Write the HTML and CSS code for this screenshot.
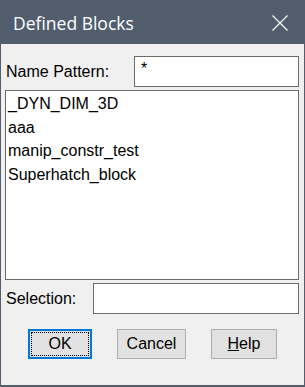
FILE: index.html
```html
<!DOCTYPE html>
<html>
<head>
	<title>Defined Blocks</title>
	<link rel="stylesheet" href="styles.css">
</head>
<body>
	<div class="dialog">
		<div class="titlebar">
			<span class="title">Defined Blocks</span>
			<svg class="close" width="16" height="16" viewBox="0 0 16 16">
				<path d="M0.5 0.5 L15.5 15.5 M15.5 0.5 L0.5 15.5" stroke="#ffffff" stroke-width="1.1" fill="none"/>
			</svg>
		</div>
		<div class="content">
			<div class="field-row pattern-row">
				<label class="label">Name Pattern:</label>
				<div class="textbox pattern-box">*</div>
			</div>
			<div class="block-list">
				<div class="block-item">_DYN_DIM_3D</div>
				<div class="block-item">aaa</div>
				<div class="block-item">manip_constr_test</div>
				<div class="block-item">Superhatch_block</div>
			</div>
			<div class="field-row selection-row">
				<label class="label">Selection:</label>
				<div class="textbox selection-box"></div>
			</div>
			<div class="buttons">
				<button class="btn btn-ok"><span class="focus-ring">OK</span></button>
				<button class="btn btn-cancel">Cancel</button>
				<button class="btn btn-help"><u>H</u>elp</button>
			</div>
		</div>
	</div>
</body>
</html>
```

FILE: styles.css
```css
body{
	margin: 0;
	font-family: 'Liberation Sans', Arial, sans-serif;
	font-size: 16px;
	color: #000000;
	background: #f0f0f0;
}
.dialog{
	width: 305px;
	height: 387px;
	box-sizing: border-box;
	background-color: #f0f0f0;
	border: 1px solid #525e6d;
	border-top: 0;
	border-bottom-width: 2px;
	display: flex;
	flex-direction: column;
}
.titlebar{
	height: 44px;
	background-color: #525e6d;
	color: white;
	display: flex;
	align-items: center;
	justify-content: space-between;
	padding: 0 16px 0 12px;
	flex-shrink: 0;
}
.title{
	font-family: 'Open Sans', 'Noto Sans', sans-serif;
	font-size: 17.5px;
	margin-top: 1px;
}
.close{
	display: block;
	margin-top: 1px;
}
.content{
	padding: 0 5px 0 4px;
	display: flex;
	flex-direction: column;
}
.field-row{
	display: flex;
	align-items: center;
	justify-content: space-between;
}
.pattern-row{
	margin-top: 12px;
}
.label{
	padding-left: 1px;
}
.textbox{
	box-sizing: border-box;
	height: 31px;
	background: white;
	border: 1px solid #6b6b6b;
	padding: 2px 6px;
	line-height: 20px;
}
.pattern-box{
	width: 165px;
}
.selection-box{
	width: 206px;
}
.block-list{
	box-sizing: border-box;
	height: 190px;
	margin-top: 3px;
	background: white;
	border: 1px solid #6b6b6b;
	padding-top: 1px;
}
.block-item{
	height: 23.5px;
	line-height: 23.5px;
	padding-left: 2px;
}
.selection-row{
	margin-top: 3px;
}
.buttons{
	display: flex;
	margin-top: 15px;
	padding-left: 23px;
	gap: 25px;
}
.btn{
	box-sizing: border-box;
	height: 30px;
	font-family: 'Liberation Sans', Arial, sans-serif;
	font-size: 16px;
	color: black;
	background-color: #e1e1e1;
	border: 1px solid #adadad;
	padding: 0;
	margin: 0;
}
.btn-ok{
	width: 64px;
	border: 2px solid #0078d7;
	padding: 1px;
}
.focus-ring{
	display: flex;
	align-items: center;
	justify-content: center;
	height: 100%;
	box-sizing: border-box;
	border: 1px dotted #000000;
}
.btn-cancel{
	width: 69px;
}
.btn-help{
	width: 66px;
}
```
